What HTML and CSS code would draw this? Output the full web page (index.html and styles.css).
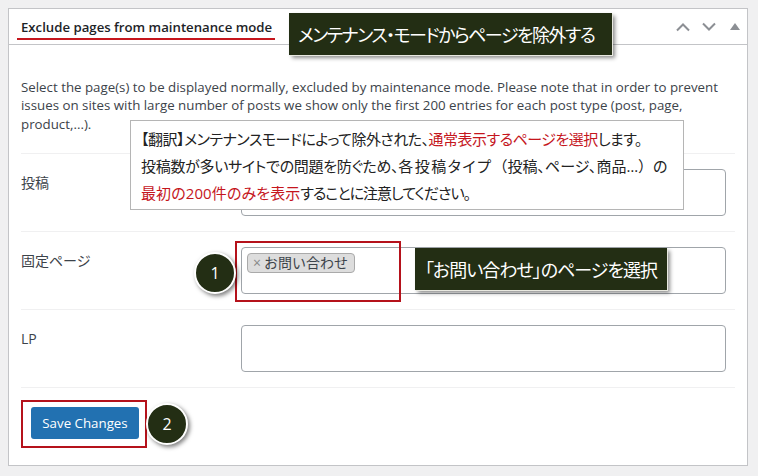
FILE: index.html
```html
<!DOCTYPE html>
<html lang="ja">

<head>
    <meta charset="UTF-8">
    <meta name="viewport" content="width=device-width, initial-scale=1.0">
    <link rel="stylesheet" href="styles.css">
</head>

<body>
    <div class="panel">
        <div class="panel-head">
            <h2 class="panel-title">Exclude pages from maintenance mode</h2>
            <div class="panel-actions">
                <svg class="panel-icon" width="16" height="10" viewBox="0 0 16 10"><path d="M2 8.5 8 2.5l6 6" /></svg>
                <svg class="panel-icon" width="16" height="10" viewBox="0 0 16 10"><path d="M2 1.5l6 6 6-6" /></svg>
                <svg class="panel-icon-solid" width="10" height="8" viewBox="0 0 10 8"><polygon points="5,0 10,7 0,7" /></svg>
            </div>
        </div>
        <div class="panel-body">
            <p class="intro">Select the page(s) to be displayed normally, excluded by maintenance mode. Please note that in order to prevent issues on sites with large number of posts we show only the first 200 entries for each post type (post, page, product,...).</p>
            <div class="form-row">
                <div class="form-label">投稿</div>
                <div class="form-input"></div>
            </div>
            <div class="form-row">
                <div class="form-label">固定ページ</div>
                <div class="form-input">
                    <span class="tag"><span class="tag-x">×</span>お問い合わせ</span>
                </div>
            </div>
            <div class="form-row">
                <div class="form-label">LP</div>
                <div class="form-input"></div>
            </div>
            <div class="form-submit">
                <button class="save-btn">Save Changes</button>
            </div>
        </div>
    </div>

    <!-- annotations on top of the screenshot -->
    <div class="underline"></div>
    <div class="note-dark note-title">メンテナンス・モードからページを除外する</div>
    <div class="note-box">
        <div class="tight">【翻訳】メンテナンスモードによって除外された、<span class="red">通常表示するページを選択</span>します。</div>
        <div><span class="tight-some">投稿数が多いサイトでの問題を防ぐため、</span><span class="loose">各投稿タイプ</span><span class="wide">（</span>投稿、ページ、商品<span class="wide">…）</span>の</div>
        <div class="tighter"><span class="red red-wide">最初の200件のみを表示</span>することに注意してください。</div>
    </div>
    <div class="red-frame frame-tag"></div>
    <div class="red-frame frame-save"></div>
    <div class="step step-one">1</div>
    <div class="step step-two">2</div>
    <div class="note-dark note-page">「お問い合わせ」のページを選択</div>
</body>

</html>
```

FILE: styles.css
```css
body {
    margin: 8px 10px 10px 8px;
    background: #f0f0f1;
    color: #3c434a;
    font-family: "Open Sans", "Noto Sans CJK JP", sans-serif;
    font-size: 13.3px;
}

.panel {
    background: #fff;
    border: 1px solid #c3c4c7;
    height: 456px;
}

.panel-head {
    display: flex;
    align-items: center;
    justify-content: space-between;
    height: 35px;
    padding: 0 7px 0 12px;
    border-bottom: 1px solid #c3c4c7;
}

.panel-title {
    margin: 0;
    font-size: 13.2px;
    font-weight: 600;
    color: #1d2327;
}

.panel-actions {
    display: flex;
    align-items: center;
    gap: 10px;
}

.panel-icon {
    fill: none;
    stroke: #8c8f94;
    stroke-width: 2;
}

.panel-icon-solid {
    fill: #8c8f94;
    margin-left: 3px;
}

.panel-body {
    padding: 0 12px;
}

.intro {
    margin: 33px 0 20px;
    line-height: 18.4px;
}

.form-row {
    display: flex;
    padding: 15px 9px 15px 0;
    border-top: 1px solid #f0f0f1;
}

.form-label {
    width: 220px;
    padding-top: 5px;
    font-size: 14px;
    line-height: 18px;
}

.form-input {
    flex: 1;
    height: 35px;
    padding: 5px;
    border: 1px solid #a0a5aa;
    border-radius: 4px;
}

.tag {
    display: inline-flex;
    align-items: center;
    height: 18px;
    padding: 0 6px 0 5px;
    background: #ddd;
    border: 1px solid #aaa;
    border-radius: 4px;
    font-size: 14px;
    line-height: 18px;
}

.tag-x {
    margin-right: 3px;
    color: #888;
}

.form-submit {
    padding-top: 19px;
    border-top: 1px solid #f0f0f1;
    padding-left: 10px;
}

.save-btn {
    width: 108px;
    height: 32px;
    padding: 0;
    background: #2271b1;
    border: 0;
    border-radius: 3px;
    color: #fff;
    font-family: inherit;
    font-size: 13.3px;
}

.underline {
    position: absolute;
    left: 17px;
    top: 38px;
    width: 258px;
    height: 2px;
    background: #c5161d;
}

.note-dark {
    position: absolute;
    box-sizing: border-box;
    background: #232e14;
    color: #fff;
    box-shadow: 1px 1px 0 #e8e8e0, 3px 3px 4px rgba(0, 0, 0, 0.45);
    font-size: 18px;
    font-feature-settings: "palt";
    display: flex;
    align-items: center;
    white-space: nowrap;
}

.note-title {
    left: 289px;
    top: 13px;
    width: 323px;
    height: 42px;
    padding-left: 9px;
    letter-spacing: -1.5px;
}

.note-page {
    left: 415px;
    top: 248px;
    width: 252px;
    height: 42px;
    padding-left: 10px;
    letter-spacing: -1px;
}

.note-box {
    position: absolute;
    left: 130px;
    top: 120px;
    width: 554px;
    height: 90px;
    box-sizing: border-box;
    padding: 5px 0 0 10px;
    background: #fff;
    border: 1px solid #b5b5b5;
    color: #222;
    font-size: 15px;
    font-feature-settings: "palt";
    line-height: 27px;
    white-space: nowrap;
}

.tight {
    letter-spacing: -0.5px;
}

.tight-some {
    letter-spacing: -0.3px;
}

.tighter {
    letter-spacing: -1px;
}

.loose {
    letter-spacing: 1.5px;
}

.wide {
    font-feature-settings: normal;
}

.red {
    color: #c5161d;
}

.red-wide {
    letter-spacing: 0.1px;
}

.red-frame {
    position: absolute;
    box-sizing: border-box;
    border: 2px solid #b5121b;
}

.frame-tag {
    left: 235px;
    top: 241px;
    width: 166px;
    height: 61px;
}

.frame-save {
    left: 21px;
    top: 400px;
    width: 126px;
    height: 48px;
}

.step {
    position: absolute;
    width: 42px;
    height: 42px;
    box-sizing: border-box;
    display: flex;
    align-items: center;
    justify-content: center;
    background: #232e14;
    border: 2px solid #fff;
    border-radius: 50%;
    box-shadow: 2px 2px 4px rgba(0, 0, 0, 0.5);
    color: #fff;
    font-size: 16px;
}

.step-one {
    left: 194px;
    top: 252px;
}

.step-two {
    left: 146px;
    top: 403px;
}
```
